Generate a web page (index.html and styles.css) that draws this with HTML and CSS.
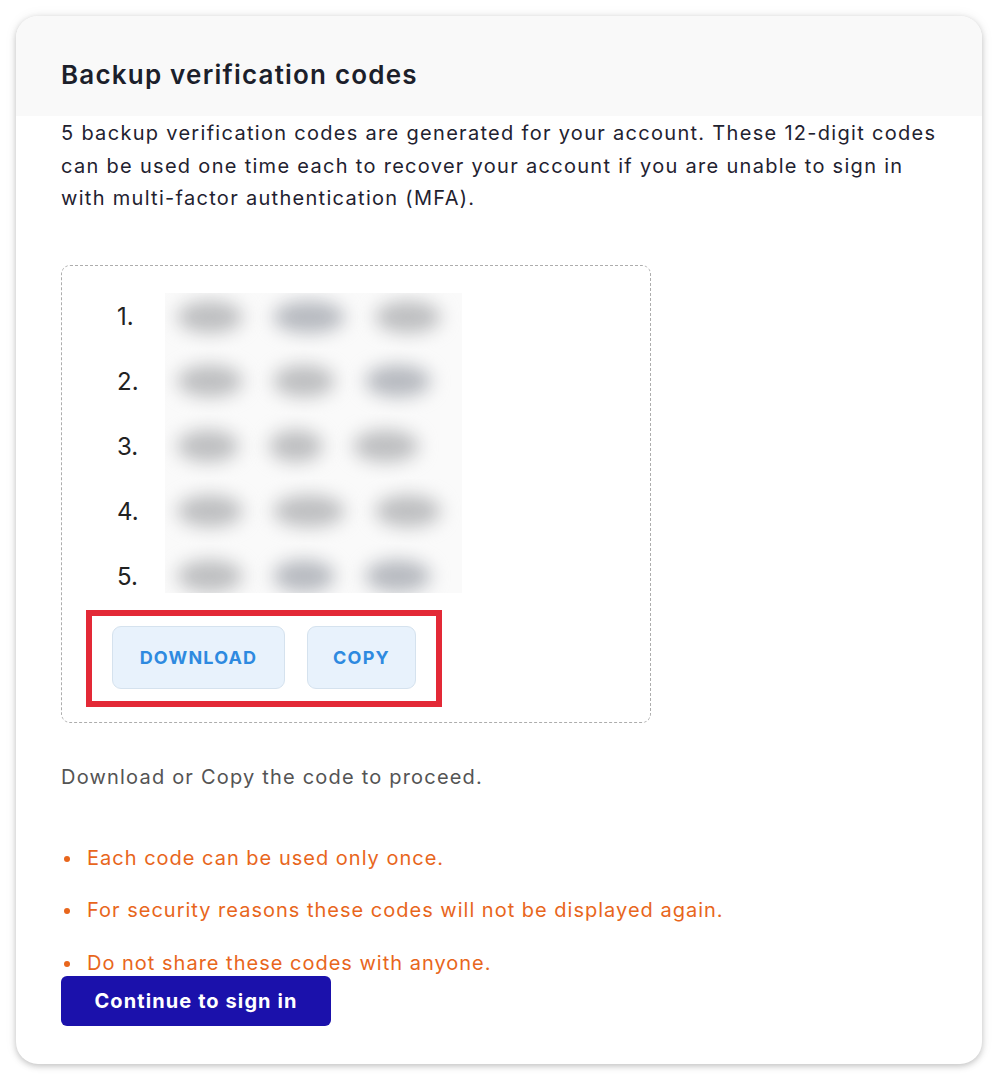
FILE: index.html
```html
<!DOCTYPE html>
<html lang="en">
<head>
    <meta charset="UTF-8">
    <title>Backup verification codes</title>
    <link rel="stylesheet" href="styles.css">
</head>
<body>
<div class="card">
    <div class="card-head">
        <h1 class="title">Backup verification codes</h1>
    </div>
    <div class="card-body">
        <p class="intro">5 backup verification codes are generated for your account. These 12-digit codes can be used one time each to recover your account if you are unable to sign in with multi-factor authentication (MFA).</p>

        <div class="codes">
            <ol class="code-list">
                <li><span class="num">1.</span><span class="code"><i class="blob w1"></i><i class="blob w2 dark"></i><i class="blob w3"></i></span></li>
                <li><span class="num">2.</span><span class="code"><i class="blob w1"></i><i class="blob w4"></i><i class="blob w3 dark"></i></span></li>
                <li><span class="num">3.</span><span class="code"><i class="blob w4"></i><i class="blob w5"></i><i class="blob w3"></i></span></li>
                <li><span class="num">4.</span><span class="code"><i class="blob w1"></i><i class="blob w2"></i><i class="blob w3"></i></span></li>
                <li><span class="num">5.</span><span class="code"><i class="blob w1"></i><i class="blob w4 dark"></i><i class="blob w3 dark"></i></span></li>
            </ol>
            <div class="actions">
                <button class="btn-light btn-download">DOWNLOAD</button>
                <button class="btn-light btn-copy">COPY</button>
            </div>
        </div>

        <p class="hint">Download or Copy the code to proceed.</p>

        <ul class="notes">
            <li>Each code can be used only once.</li>
            <li>For security reasons these codes will not be displayed again.</li>
            <li>Do not share these codes with anyone.</li>
        </ul>

        <button class="btn-primary">Continue to sign in</button>
    </div>
</div>
</body>
</html>
```

FILE: styles.css
```css
html, body {
    margin: 0;
    padding: 0;
    background: #fff;
}

body {
    font-family: Inter, "Noto Sans", sans-serif;
    padding: 16px;
}

p, h1, ul, ol {
    margin: 0;
    padding: 0;
}

.card {
    width: 966px;
    height: 1048px;
    box-sizing: border-box;
    border-radius: 22px;
    background: #fff;
    box-shadow: 0 2px 6px rgba(0, 0, 0, 0.22), 0 0 14px rgba(0, 0, 0, 0.06);
    overflow: hidden;
}

.card-head {
    height: 100px;
    background: #f9f9f9;
    padding: 42px 45px 0;
    box-sizing: border-box;
}

.title {
    font-size: 26px;
    font-weight: 600;
    line-height: 34px;
    letter-spacing: 1.2px;
    color: #1c1f2b;
}

.card-body {
    padding: 1px 45px 0;
}

.intro {
    font-size: 20px;
    line-height: 32.5px;
    letter-spacing: 1.3px;
    color: #1f2230;
    width: 880px;
}

.codes {
    margin-top: 50px;
    width: 590px;
    height: 458px;
    box-sizing: border-box;
    border: 1px dashed #adadad;
    border-radius: 9px;
    padding-top: 18px;
}

.code-list {
    list-style: none;
}

.code-list li {
    display: flex;
    align-items: stretch;
    height: 65px;
}

.code-list li:first-child .code {
    margin-top: 9px;
    align-items: flex-start;
    padding-top: 8px;
}

.code-list li:last-child .code {
    margin-bottom: 16px;
    align-items: flex-end;
    padding-bottom: 1px;
}

.num {
    width: 103px;
    padding-left: 55px;
    box-sizing: border-box;
    font-size: 24px;
    line-height: 65px;
    color: #222;
}

.code {
    width: 297px;
    box-sizing: border-box;
    background: #fafafa;
    display: flex;
    align-items: center;
    padding-left: 12px;
    gap: 30px;
    overflow: hidden;
}

.blob {
    display: block;
    height: 32px;
    border-radius: 50%;
    background: #bdbec0;
    filter: blur(9px);
}

.blob.dark {
    background: #b6b9bf;
}

.w1 { width: 66px; }
.w2 { width: 72px; }
.w3 { width: 66px; }
.w4 { width: 62px; }
.w5 { width: 54px; }

.actions {
    display: inline-flex;
    gap: 22px;
    margin-left: 24px;
    margin-top: 1px;
    padding: 10px 20px 12px;
    border: 6px solid #e32936;
}

.btn-light {
    height: 63px;
    border: 1px solid #d5e2ee;
    border-radius: 9px;
    background: #e8f2fc;
    color: #2e8ae0;
    font-family: Inter, "Noto Sans", sans-serif;
    font-size: 18px;
    font-weight: 700;
    letter-spacing: 1.2px;
    cursor: pointer;
}

.btn-download {
    width: 173px;
}

.btn-copy {
    width: 109px;
}

.hint {
    margin-top: 40px;
    font-size: 20px;
    line-height: 28px;
    letter-spacing: 1.2px;
    color: #545454;
}

.notes {
    margin-top: 54px;
    list-style: none;
    color: #e8661c;
    font-size: 20px;
    letter-spacing: 1px;
}

.notes li {
    position: relative;
    padding-left: 26px;
    line-height: 26px;
    margin-bottom: 26.5px;
}

.notes li:last-child {
    margin-bottom: 0;
}

.notes li::before {
    content: "";
    position: absolute;
    left: 3px;
    top: 11px;
    width: 6px;
    height: 6px;
    border-radius: 50%;
    background: #e8661c;
}

.btn-primary {
    width: 270px;
    height: 50px;
    border: none;
    border-radius: 6px;
    background: #1b11ab;
    color: #fff;
    font-family: Inter, "Noto Sans", sans-serif;
    font-size: 20px;
    font-weight: 700;
    letter-spacing: 1.1px;
    cursor: pointer;
}
```
